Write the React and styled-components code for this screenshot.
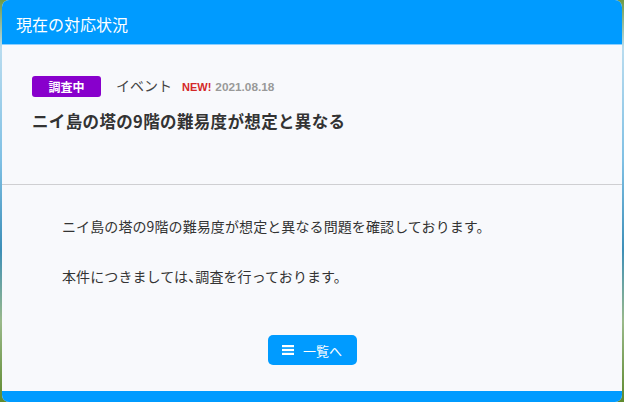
import React from "react";
import styled, { createGlobalStyle } from "styled-components";

const GlobalStyle = createGlobalStyle`
  html, body {
    margin: 0;
    padding: 0;
  }
  body {
    width: 624px;
    height: 402px;
    overflow: hidden;
    background: linear-gradient(
      to bottom,
      #6f9a45 0%,
      #b9dcef 12%,
      #7fc0e4 40%,
      #3d8fb8 62%,
      #9ab98a 80%,
      #5f8a2e 100%
    );
    font-family: "Noto Sans CJK JP", "Noto Sans", sans-serif;
  }
`;

const Modal = styled.div`
  margin: 0 2px;
  width: 620px;
  height: 402px;
  border-radius: 7px;
  overflow: hidden;
  background: #f8f9fc;
  display: flex;
  flex-direction: column;
`;

const Header = styled.div`
  height: 45px;
  box-sizing: border-box;
  border-bottom: 1px solid #8ccfff;
  background: #009bff;
  color: #fff;
  font-size: 16px;
  display: flex;
  align-items: center;
  padding: 3px 0 0 14px;
`;

const TopSection = styled.div`
  height: 140px;
  border-bottom: 1px solid #cfcfd2;
  padding: 31px 0 0 30px;
  box-sizing: border-box;
`;

const MetaRow = styled.div`
  display: flex;
  align-items: center;
  height: 21px;
`;

const Badge = styled.span`
  width: 69px;
  height: 21px;
  border-radius: 3px;
  background: ${(p) => p.color || "#8800cc"};
  color: #fff;
  font-size: 12px;
  font-weight: 700;
  display: flex;
  align-items: center;
  justify-content: center;
`;

const Category = styled.span`
  margin-left: 15px;
  font-size: 14px;
  color: #444;
  position: relative;
  top: -2px;
`;

const NewMark = styled.span`
  margin-left: 10px;
  font-family: "Liberation Sans", Arial, sans-serif;
  font-size: 11px;
  font-weight: 700;
  color: #d42828;
`;

const DateText = styled.span`
  margin-left: 4px;
  font-family: "Liberation Sans", Arial, sans-serif;
  font-size: 11.8px;
  font-weight: 700;
  color: #999;
`;

const Title = styled.h2`
  margin: 12px 0 0;
  font-size: 16.5px;
  font-weight: 700;
  color: #333;
  letter-spacing: 0.35px;
`;

const Content = styled.div`
  flex: 1;
  display: flex;
  flex-direction: column;
  padding: 31px 0 0 60px;
`;

const Para = styled.p`
  margin: 0 0 29px;
  font-size: 14px;
  line-height: 21px;
  color: #333;
  letter-spacing: 0.1px;
`;

const Punct = styled.span`
  font-feature-settings: "halt";
`;

const ButtonRow = styled.div`
  display: flex;
  justify-content: center;
  margin: 19px 0 0 -60px;
`;

const ListButton = styled.button`
  width: 89px;
  height: 30px;
  border: none;
  border-radius: 5px;
  background: #009bff;
  color: #fff;
  font-family: "Noto Sans CJK JP", sans-serif;
  font-size: 13px;
  display: flex;
  align-items: center;
  justify-content: center;
  gap: 9px;
  padding: 0;
`;

const Footer = styled.div`
  height: 11px;
  background: #009bff;
`;

const MenuIcon = () => (
  <svg width="12" height="10" viewBox="0 0 12 10">
    <rect x="0" y="0" width="12" height="2.2" fill="#fff" />
    <rect x="0" y="3.9" width="12" height="2.2" fill="#fff" />
    <rect x="0" y="7.8" width="12" height="2.2" fill="#fff" />
  </svg>
);

export default function App() {
  return (
    <>
      <GlobalStyle />
      <Modal>
        <Header>現在の対応状況</Header>
        <TopSection>
          <MetaRow>
            <Badge>調査中</Badge>
            <Category>イベント</Category>
            <NewMark>NEW!</NewMark>
            <DateText>2021.08.18</DateText>
          </MetaRow>
          <Title>ニイ島の塔の9階の難易度が想定と異なる</Title>
        </TopSection>
        <Content>
          <Para>ニイ島の塔の9階の難易度が想定と異なる問題を確認しております。</Para>
          <Para>
            本件につきましては<Punct>、</Punct>調査を行っております。
          </Para>
          <ButtonRow>
            <ListButton>
              <MenuIcon />
              一覧へ
            </ListButton>
          </ButtonRow>
        </Content>
        <Footer />
      </Modal>
    </>
  );
}
